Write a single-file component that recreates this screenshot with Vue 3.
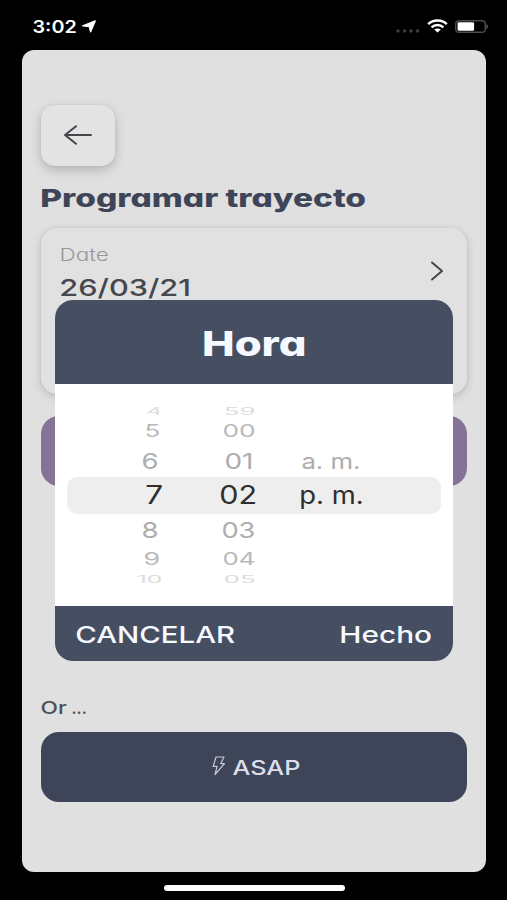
<script setup>
import { h } from 'vue'

// Wide lettering: the box is as tall as the capitals and the line is set to an exact width.
const Wide = (props) =>
  h('svg', { width: props.w, height: props.cap, overflow: 'visible', style: { display: 'block', flex: 'none' } }, [
    h('text', {
      x: -props.cap * 0.04,
      y: props.cap,
      textLength: props.w + props.cap * 0.1,
      lengthAdjust: 'spacingAndGlyphs',
      'font-size': props.cap / 0.727,
      'font-weight': props.weight,
      fill: 'currentColor',
    }, props.text),
  ])
Wide.props = ['text', 'w', 'cap', 'weight']

// x and w are measured inside the wheel, y is the row's centre line.
const hours = [
  { t: '4', x: 91.5, w: 14.5, y: 27, cap: 7, c: '#dcdcdc' },
  { t: '5', x: 90, w: 14.5, y: 47.3, cap: 12.3, c: '#b9b9b9' },
  { t: '6', x: 87, w: 15.5, y: 76.7, cap: 15.5, c: '#adadad' },
  { t: '7', x: 91, w: 16, y: 110.7, cap: 18.5, c: '#2e2e2e' },
  { t: '8', x: 87, w: 15.5, y: 146, cap: 15.5, c: '#adadad' },
  { t: '9', x: 89, w: 15.5, y: 174.8, cap: 12.3, c: '#b9b9b9' },
  { t: '10', x: 81.5, w: 25, y: 195, cap: 7, c: '#dcdcdc' },
]
const minutes = [
  { t: '59', x: 168.5, w: 31, y: 27, cap: 7, c: '#dcdcdc' },
  { t: '00', x: 167.5, w: 32, y: 47.3, cap: 12.3, c: '#b9b9b9' },
  { t: '01', x: 169.5, w: 27.5, y: 76.7, cap: 15.5, c: '#adadad' },
  { t: '02', x: 165, w: 36, y: 110.7, cap: 18.5, c: '#2e2e2e' },
  { t: '03', x: 166.5, w: 32.5, y: 146, cap: 15.5, c: '#adadad' },
  { t: '04', x: 167.5, w: 31.5, y: 174.8, cap: 12.3, c: '#b9b9b9' },
  { t: '05', x: 168.5, w: 31, y: 195, cap: 7, c: '#dcdcdc' },
]
const periods = [
  { t: 'a. m.', x: 247, w: 57.5, y: 76.7, cap: 15.5, c: '#adadad' },
  { t: 'p. m.', x: 245, w: 62.5, y: 110.7, cap: 18.5, c: '#2e2e2e' },
]
const drum = [...hours, ...minutes, ...periods]
</script>

<template>
  <div class="phone">
    <header class="status">
      <div class="clock">
        <Wide text="3:02" :w="43" :cap="12.5" weight="600" />
        <svg class="locate" width="14" height="13" viewBox="0 0 14 13"><path d="M13.2.9 8.6 11.8 7.4 6.5.8 5.9Z" fill="#fff" stroke="#fff" stroke-width="1.4" stroke-linejoin="round" /></svg>
      </div>
      <div class="signals">
        <svg width="24" height="4" viewBox="0 0 24 4" class="dots"><g fill="#3c3c3c"><circle cx="2" cy="2" r="1.8" /><circle cx="8.5" cy="2" r="1.8" /><circle cx="15" cy="2" r="1.8" /><circle cx="21.5" cy="2" r="1.8" /></g></svg>
        <svg width="21" height="14" viewBox="0 0 21 14"><g fill="none" stroke="#fff" stroke-width="2.5"><path d="M1.2 5.1C6.3.2 14.7.2 19.8 5.1" /><path d="M4.6 8.3c3.3-3 8.5-3 11.8 0" /></g><path d="M7.2 10.6c1.9-1.6 4.7-1.6 6.6 0L10.5 13.4Z" fill="#fff" /></svg>
        <svg width="34" height="13" viewBox="0 0 34 13"><rect x=".7" y=".7" width="29.6" height="11.6" rx="3.4" fill="none" stroke="#4c4c4c" stroke-width="1.4" /><rect x="2.6" y="2.2" width="16.5" height="8.6" rx="1.4" fill="#fff" /><path d="M31.2 4v5c2.6-.8 2.6-4.2 0-5Z" fill="#4c4c4c" /></svg>
      </div>
    </header>

    <main class="sheet">
      <button class="back" aria-label="Back">
        <svg width="30" height="20" viewBox="0 0 30 20"><path d="M28 10H2M13 1.2 2 10l11 8.8" fill="none" stroke="#43464d" stroke-width="2" stroke-linecap="round" stroke-linejoin="round" /></svg>
      </button>
      <h1 class="title"><Wide text="Programar trayecto" :w="324" :cap="18" weight="800" /></h1>

      <section class="card">
        <div>
          <div class="label"><Wide text="Date" :w="48" :cap="13" weight="300" /></div>
          <div class="value"><Wide text="26/03/21" :w="130" :cap="17" weight="500" /></div>
        </div>
        <svg class="chevron" width="14" height="20" viewBox="0 0 14 20"><path d="M2 1.5 12 10 2 18.5" fill="none" stroke="#43464d" stroke-width="2" stroke-linecap="round" stroke-linejoin="round" /></svg>
      </section>

      <button class="primary"></button>
      <div class="or"><Wide text="Or" :w="25" :cap="12.5" weight="500" /><Wide text="..." :w="14" :cap="12.5" weight="500" /></div>
      <button class="asap">
        <svg width="14" height="20" viewBox="0 0 14 20"><path d="M4 1h8L8.8 7.6h3.7L3 18.5 5.1 10.4H1.2Z" fill="none" stroke="#c3c8d6" stroke-width="1.2" stroke-linejoin="round" /></svg>
        <Wide text="ASAP" :w="66.5" :cap="14.5" weight="500" />
      </button>
    </main>

    <div class="home"></div>

    <div class="dialog">
      <div class="head"><Wide text="Hora" :w="102" :cap="24.5" weight="800" /></div>
      <div class="wheel">
        <div class="band"></div>
        <div
          v-for="row in drum"
          :key="row.t"
          class="row"
          :style="{ left: row.x + 'px', top: row.y - row.cap / 2 + 'px', color: row.c }"
        ><Wide :text="row.t" :w="row.w" :cap="row.cap" weight="400" /></div>
      </div>
      <div class="foot">
        <Wide text="CANCELAR" :w="158" :cap="16.5" weight="500" />
        <Wide text="Hecho" :w="91" :cap="16.5" weight="500" />
      </div>
    </div>
  </div>
</template>

<style>
body { margin: 0; background: #000; }
</style>

<style scoped>
.phone {
  position: relative;
  display: flex;
  flex-direction: column;
  width: 507px;
  height: 900px;
  overflow: hidden;
  background: #000;
  font-family: Inter, "Liberation Sans", sans-serif;
}
button { border: 0; padding: 0; font: inherit; display: flex; align-items: center; justify-content: center; }
.status { height: 50px; flex: none; box-sizing: border-box; padding: 19px 18px 0 33px; display: flex; justify-content: space-between; align-items: flex-start; color: #fff; }
.clock { display: flex; align-items: center; gap: 6px; padding-top: 1px; }
.signals { display: flex; align-items: center; gap: 7px; }
.dots { margin-top: 9px; }
.sheet {
  height: 822px;
  flex: none;
  box-sizing: border-box;
  margin: 0 21.5px 0 22px;
  padding: 55px 19px 0;
  border-radius: 12px;
  background: #e0e0e0;
  display: flex;
  flex-direction: column;
  font-feature-settings: "cv11" 1;
}
.back { width: 74px; height: 61px; border-radius: 14px; background: #e3e3e3; box-shadow: 0 4px 12px rgba(0, 0, 0, .2), 0 0 3px rgba(0, 0, 0, .06); }
.back svg { margin-top: -2px; }
.title { margin: 23px 0 0; color: #3e4558; }
.card {
  height: 166px;
  margin-top: 21px;
  padding: 20px 23px 0 19px;
  box-sizing: border-box;
  border-radius: 16px;
  background: #e1e1e1;
  box-shadow: 0 3px 10px rgba(0, 0, 0, .16), 0 0 3px rgba(0, 0, 0, .08);
  display: flex;
  justify-content: space-between;
  align-items: flex-start;
}
.label { color: #96989c; }
.value { margin-top: 18px; color: #44474d; }
.chevron { margin-top: 13px; }
.primary { height: 70px; margin-top: 22px; border-radius: 18px; background: #857397; }
.or { margin-top: 214.5px; color: #4f5155; display: flex; gap: 6px; }
.asap { height: 70px; margin-top: 18.5px; border-radius: 18px; background: #3e4558; color: #dadeea; gap: 7px; padding-left: 4px; }
.asap svg:first-child { margin-top: -2px; }
.asap svg:last-child { margin-top: 2px; }
.home { width: 181px; height: 6px; margin: 13px 0 0 163.5px; border-radius: 3px; background: #fff; }
.dialog {
  position: absolute;
  left: 55px;
  top: 299.5px;
  width: 398px;
  height: 361.5px;
  border-radius: 18px;
  overflow: hidden;
  background: #fff;
  color: #f6f9ff;
  display: flex;
  flex-direction: column;
}
.head { height: 84.5px; flex: none; box-sizing: border-box; padding-top: 3px; display: flex; align-items: center; justify-content: center; background: #464f62; font-feature-settings: "cv11" 1; }
.wheel { position: relative; flex: 1; }
.band { height: 37.5px; margin: 92.5px 12px 0; border-radius: 10px; background: #eee; }
.row { position: absolute; }
.foot { height: 55px; flex: none; box-sizing: border-box; padding: 2px 22px 0 21px; display: flex; align-items: center; justify-content: space-between; background: #464f62; }
</style>
